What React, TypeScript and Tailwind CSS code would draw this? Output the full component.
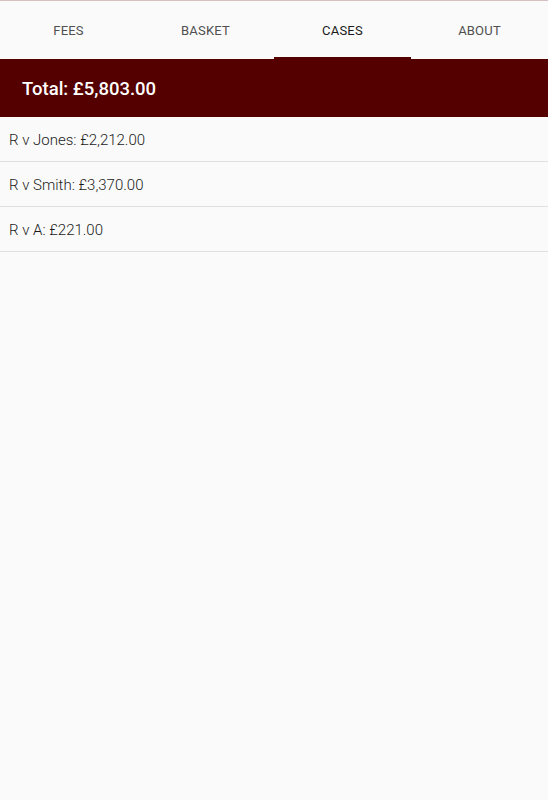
import React from "react";

export default function App() {
  const tabs = ["FEES", "BASKET", "CASES", "ABOUT"];
  const rows = ["R v Jones: £2,212.00", "R v Smith: £3,370.00", "R v A: £221.00"];
  return (
    <div className="min-h-[800px] w-[548px] bg-[#fafafa]" style={{ fontFamily: "Roboto, 'Noto Sans', sans-serif" }}>
      <div className="h-px bg-[#d7bfc0]" />
      <div className="grid grid-cols-4 h-[58px]">
        {tabs.map((t) => (
          <div key={t} className="relative flex items-center justify-center pt-[2px]">
            <span className={`text-[13px] tracking-[0.2px] ${t === "CASES" ? "text-[#1a1a1a]" : "text-[#505050]"}`}>{t}</span>
            {t === "CASES" && <div className="absolute bottom-0 left-0 right-0 h-[2px] bg-[#550000]" />}
          </div>
        ))}
      </div>
      <div className="h-[58px] bg-[#550000] flex items-center pl-[22px] pt-[3px]">
        <span className="text-white text-[18.5px] font-medium">Total: £5,803.00</span>
      </div>
      {rows.map((r) => (
        <div key={r} className="h-[45px] border-b border-[#e0e0e0] flex items-center pl-[9px] pt-[2px]">
          <span className="text-[15px] text-[#1a1a1a] font-light">{r}</span>
        </div>
      ))}
    </div>
  );
}
